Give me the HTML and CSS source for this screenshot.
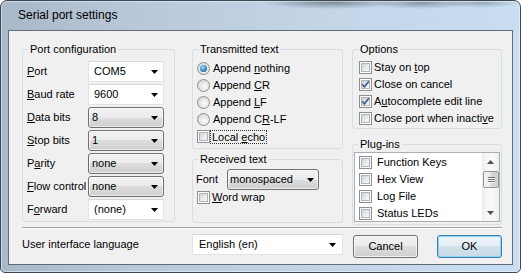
FILE: index.html
```html
<!DOCTYPE html>
<html>
<head>
<meta charset="utf-8">
<link rel="stylesheet" href="styles.css">
</head>
<body>
<div class="window">
  <div class="titlebar">Serial port settings</div>
  <div class="client">
    <div class="top">
      <fieldset class="gb port">
        <legend>Port configuration</legend>
        <div class="form">
          <span class="lbl"><u>P</u>ort</span>
          <div class="combo edit"><span>COM5</span><svg class="arr" width="7" height="4" viewBox="0 0 7 4"><path d="M0 0H7L3.5 4Z"/></svg></div>
          <span class="lbl"><u>B</u>aud rate</span>
          <div class="combo edit"><span>9600</span><svg class="arr" width="7" height="4" viewBox="0 0 7 4"><path d="M0 0H7L3.5 4Z"/></svg></div>
          <span class="lbl"><u>D</u>ata bits</span>
          <div class="combo list"><span>8</span><svg class="arr" width="7" height="4" viewBox="0 0 7 4"><path d="M0 0H7L3.5 4Z"/></svg></div>
          <span class="lbl"><u>S</u>top bits</span>
          <div class="combo list"><span>1</span><svg class="arr" width="7" height="4" viewBox="0 0 7 4"><path d="M0 0H7L3.5 4Z"/></svg></div>
          <span class="lbl">P<u>a</u>rity</span>
          <div class="combo list"><span>none</span><svg class="arr" width="7" height="4" viewBox="0 0 7 4"><path d="M0 0H7L3.5 4Z"/></svg></div>
          <span class="lbl"><u>F</u>low control</span>
          <div class="combo list"><span>none</span><svg class="arr" width="7" height="4" viewBox="0 0 7 4"><path d="M0 0H7L3.5 4Z"/></svg></div>
          <span class="lbl">F<u>o</u>rward</span>
          <div class="combo edit"><span>(none)</span><svg class="arr" width="7" height="4" viewBox="0 0 7 4"><path d="M0 0H7L3.5 4Z"/></svg></div>
        </div>
      </fieldset>

      <div class="col2">
        <fieldset class="gb tx">
          <legend>Transmitted text</legend>
          <div class="body">
            <div class="row"><span class="rb on"><i></i></span><span class="txt">Append <u>n</u>othing</span></div>
            <div class="row"><span class="rb"></span><span class="txt">Append <u>C</u>R</span></div>
            <div class="row"><span class="rb"></span><span class="txt">Append <u>L</u>F</span></div>
            <div class="row"><span class="rb"></span><span class="txt">Append C<u>R</u>-LF</span></div>
            <div class="row"><span class="cb"><i class="in"></i></span><span class="focus">Local <u>e</u>cho</span></div>
          </div>
        </fieldset>
        <fieldset class="gb rx">
          <legend>Received text</legend>
          <div class="body">
            <div class="fontrow">
              <span class="fontlbl">Font</span>
              <div class="combo list mono"><span>monospaced</span><svg class="arr" width="7" height="4" viewBox="0 0 7 4"><path d="M0 0H7L3.5 4Z"/></svg></div>
            </div>
            <div class="wrow"><span class="cb"><i class="in"></i></span><span class="txt2"><u>W</u>ord wrap</span></div>
          </div>
        </fieldset>
      </div>

      <div class="col3">
        <fieldset class="gb opts">
          <legend>Options</legend>
          <div class="body">
            <div class="row"><span class="cb"><i class="in"></i></span><span class="txt2">Stay on <u>t</u>op</span></div>
            <div class="row"><span class="cb"><i class="in"></i><svg width="9" height="9" viewBox="0 0 9 9"><path d="M1.2 4.3L3.4 6.9L7.9 1.2" fill="none" stroke="#41608f" stroke-width="1.7"/></svg></span><span class="txt2">Close on cancel</span></div>
            <div class="row"><span class="cb"><i class="in"></i><svg width="9" height="9" viewBox="0 0 9 9"><path d="M1.2 4.3L3.4 6.9L7.9 1.2" fill="none" stroke="#41608f" stroke-width="1.7"/></svg></span><span class="txt2">A<u>u</u>tocomplete edit line</span></div>
            <div class="row"><span class="cb"><i class="in"></i></span><span class="txt2">Close port when inacti<u>v</u>e</span></div>
          </div>
        </fieldset>
        <fieldset class="gb plugins">
          <legend>Plug-ins</legend>
          <div class="body">
            <div class="listbox">
              <div class="items">
                <div class="li"><span class="cb"><i class="in"></i></span><span class="txt3">Function Keys</span></div>
                <div class="li"><span class="cb"><i class="in"></i></span><span class="txt3">Hex View</span></div>
                <div class="li"><span class="cb"><i class="in"></i></span><span class="txt3">Log File</span></div>
                <div class="li"><span class="cb"><i class="in"></i></span><span class="txt3">Status LEDs</span></div>
              </div>
              <div class="sb">
                <div class="sbbtn"><svg width="7" height="4" viewBox="0 0 7 4"><path d="M0 4H7L3.5 0Z" fill="#505050"/></svg></div>
                <div class="thumb"><i></i><i></i><i></i></div>
                <div class="track"></div>
                <div class="sbbtn"><svg width="7" height="4" viewBox="0 0 7 4"><path d="M0 0H7L3.5 4Z" fill="#505050"/></svg></div>
              </div>
            </div>
          </div>
        </fieldset>
      </div>
    </div>

    <div class="sep"></div>

    <div class="bottom">
      <span class="langlbl">User interface language</span>
      <div class="combo edit lang"><span>English (en)</span><svg class="arr" width="7" height="4" viewBox="0 0 7 4"><path d="M0 0H7L3.5 4Z"/></svg></div>
      <div class="btn cancel">Cancel</div>
      <div class="btn ok">OK</div>
    </div>
  </div>
</div>
</body>
</html>
```

FILE: styles.css
```css
* { box-sizing: border-box; }
html, body { margin: 0; padding: 0; }
body {
  width: 521px;
  height: 273px;
  overflow: hidden;
  font: 11px/13px "Liberation Sans", Arial, sans-serif;
  color: #000;
  background: #fff;
}
u { text-decoration: underline; text-underline-offset: 1px; }

.window {
  width: 521px;
  height: 273px;
  border: 1px solid #3b4755;
  border-radius: 7px 7px 5px 5px;
  padding: 0 7px 7px;
  display: flex;
  flex-direction: column;
  background:
    radial-gradient(ellipse 70px 7px at 330px 1px, rgba(60,70,82,.55), rgba(60,70,82,0)),
    radial-gradient(ellipse 50px 6px at 420px 2px, rgba(60,70,82,.45), rgba(60,70,82,0)),
    radial-gradient(ellipse 40px 5px at 480px 2px, rgba(60,70,82,.35), rgba(60,70,82,0)),
    linear-gradient(to right, #a9b8c8 0%, #b9c8d8 25%, #c3d4e6 60%, #c9def3 100%);
  box-shadow: inset 0 0 0 1px rgba(255,255,255,.45);
}

.titlebar {
  height: 29px;
  flex: none;
  display: flex;
  align-items: center;
  padding-left: 10px;
  font-size: 12px;
  color: #000;
}

.client {
  height: 235px;
  flex: none;
  border: 1px solid #5f6c7a;
  background: #f0f0f0;
  padding: 0 10px 0 13px;
}

.top {
  display: flex;
  align-items: flex-start;
  margin-top: 12px;
}

.gb {
  margin: 0;
  padding: 0;
  min-width: 0;
  border: 1px solid #d5dfe5;
  border-radius: 3px;
}
.gb legend {
  margin-left: 5px;
  padding: 0 2px;
  line-height: 13px;
}

.port { width: 153px; margin-right: 17px; flex: none; }
.col2 { width: 151px; margin-right: 9px; flex: none; }
.col3 { width: 150px; flex: none; }

/* port configuration grid */
.port .form {
  display: grid;
  grid-template-columns: 61px 76px;
  grid-auto-rows: 21px;
  row-gap: 2px;
  align-items: center;
  padding: 5px 0 1px 4px;
}
.lbl { white-space: nowrap; }

/* combo boxes */
.combo {
  height: 21px;
  display: flex;
  align-items: center;
  justify-content: space-between;
  padding: 0 5px 0 5px;
  white-space: nowrap;
}
.combo .arr { fill: #000; flex: none; }
.combo.edit {
  background: #fff;
  border: 1px solid #e1e3e7;
  border-top-color: #d6d8dc;
}
.combo.list {
  border: 1px solid #707070;
  border-radius: 3px;
  padding-left: 3px;
  background: linear-gradient(#f2f2f2 0%, #ebebeb 50%, #dddddd 50%, #cfcfcf 100%);
  box-shadow: inset 0 0 0 1px rgba(255,255,255,.6);
}

/* check boxes */
.cb {
  flex: none;
  display: grid;
  width: 13px;
  height: 13px;
  border: 1px solid #8e8f8f;
  background: #fff;
  padding: 1px;
}
.cb > * { grid-area: 1 / 1; }
.cb .in {
  display: block;
  border: 1px solid #b0b4b9;
  background: linear-gradient(135deg, #cfd3d8 0%, #e9ebed 55%, #f7f7f7 100%);
}
.cb svg { display: block; }

/* radio buttons */
.rb {
  flex: none;
  width: 13px;
  height: 13px;
  border-radius: 50%;
  border: 1px solid #8e8f8f;
  background: radial-gradient(circle at 60% 60%, #fafafa 0%, #e6e6e6 50%, #c6c6c6 100%);
  display: flex;
  align-items: center;
  justify-content: center;
}
.rb.on i {
  display: block;
  width: 7px;
  height: 7px;
  border-radius: 50%;
  background: radial-gradient(circle at 40% 35%, #b5e0fb 0%, #3f95d6 45%, #17507e 100%);
}

/* transmitted text */
.tx .body { padding: 4px 0 3px 4px; }
.row {
  height: 17px;
  display: flex;
  align-items: center;
  white-space: nowrap;
}
.txt { margin-left: 3px; }
.txt2 { margin-left: 2px; }
.focus {
  margin-left: 0;
  padding: 0 1px;
  line-height: 12px;
  border: 1px dotted #333;
}

/* received text */
.rx { margin-top: 4px; }
.rx .body { padding: 3px 0 17px 3px; }
.fontrow { display: flex; align-items: center; }
.fontlbl { width: 31px; }
.combo.mono { width: 92px; padding-left: 2px; padding-right: 4px; }
.wrow {
  height: 15px;
  display: flex;
  align-items: center;
  padding-left: 1px;
}

/* options */
.opts .body { padding: 3px 0 1px 6px; }

/* plug-ins */
.plugins { margin-top: 9px; }
.plugins .body { padding: 1px 1px 2px 1px; }
.listbox {
  height: 70px;
  border: 1px solid #abadb3;
  background: #fff;
  display: flex;
  overflow: hidden;
}
.items {
  flex: 1;
  padding: 1px 0 0 4px;
  overflow: hidden;
}
.li {
  height: 17px;
  display: flex;
  align-items: center;
  white-space: nowrap;
}
.txt3 { margin-left: 5px; }
.sb {
  width: 17px;
  flex: none;
  display: flex;
  flex-direction: column;
  background: linear-gradient(to right, #ececec, #f8f8f8 30%, #f8f8f8 70%, #ececec);
}
.sbbtn {
  height: 17px;
  flex: none;
  display: flex;
  align-items: center;
  justify-content: center;
}
.thumb {
  height: 17px;
  flex: none;
  margin: 1px 0 0 1px;
  border: 1px solid #969696;
  border-radius: 2px;
  background: linear-gradient(to right, #f4f4f4 0%, #e8e8e8 50%, #d9d9d9 51%, #d0d0d0 100%);
  display: flex;
  flex-direction: column;
  align-items: center;
  justify-content: center;
  gap: 1px;
}
.thumb i {
  display: block;
  width: 7px;
  height: 1px;
  background: #6e6e6e;
  box-shadow: 0 1px 0 #fff;
}
.track { flex: 1; }

/* separator and bottom */
.sep {
  margin-top: 2px;
  height: 2px;
  border-top: 1px solid #a0a0a0;
  border-bottom: 1px solid #ffffff;
}
.bottom {
  display: flex;
  align-items: flex-start;
}
.langlbl {
  width: 170px;
  flex: none;
  margin-top: 9px;
}
.combo.lang {
  width: 151px;
  flex: none;
  margin-top: 5px;
  padding-left: 6px;
  padding-right: 6px;
}
.btn {
  width: 65px;
  height: 23px;
  flex: none;
  margin-top: 6px;
  border: 1px solid #707070;
  border-radius: 3px;
  background: linear-gradient(#f2f2f2 0%, #ebebeb 50%, #dddddd 50%, #cfcfcf 100%);
  box-shadow: inset 0 0 0 1px rgba(255,255,255,.7);
  display: flex;
  align-items: center;
  justify-content: center;
}
.btn.cancel { margin-left: 10px; }
.btn.ok {
  margin-left: 19px;
  border-color: #3c7fb1;
  background: linear-gradient(#edf4f9 0%, #e3edf4 50%, #d3e1eb 50%, #c9dae6 100%);
  box-shadow: inset 0 0 0 1px #8fd6f5;
}
```
